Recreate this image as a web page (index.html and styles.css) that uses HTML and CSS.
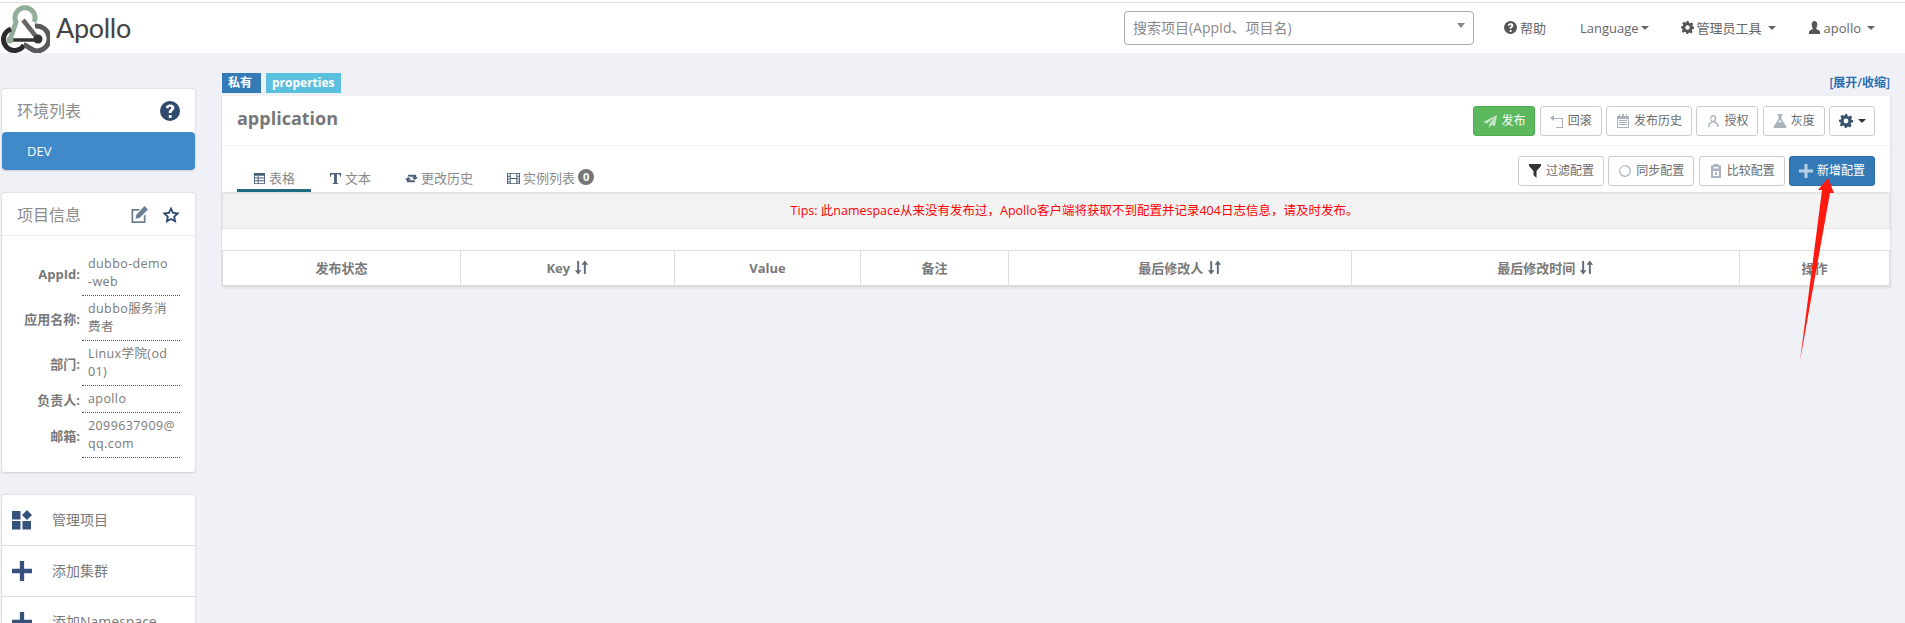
FILE: index.html
```html
<!DOCTYPE html>
<html lang="zh">
<head>
<meta charset="utf-8">
<title>Apollo</title>
<link rel="stylesheet" href="styles.css">
</head>
<body>
<svg class="defs" width="0" height="0">
  <symbol id="i-send" viewBox="0 0 14 14"><path d="M14 1 0 8l4 1.500L11 4 6 10.500V14l2.500-3L12 12z"/></symbol>
  <symbol id="i-undo" viewBox="0 0 14 14"><path d="M4 1 0 4l4 3V5h8v8H6v1h7V4H4z"/></symbol>
  <symbol id="i-cal" viewBox="0 0 14 14"><path d="M3 0h1v2h2V0h2v2h2V0h1v2h2v12H1V2h2zM2 5v8h10V5zm1 1h8v1H3zm0 2h8v1H3zm0 2h8v1H3z"/></symbol>
  <symbol id="i-userline" viewBox="0 0 14 14"><path d="M7 1a3.300 3.300 0 0 1 3.300 3.500c0 1.300-.6 2.400-1.300 3l3.500 2.500V13h-1.500v-2.200L8 8.600H6l-2.500 2.200V13H2v-3l3.500-2.500c-.7-.6-1.300-1.700-1.300-3A3.300 3.300 0 0 1 7 1zm0 1.500a1.800 1.800 0 0 0-1.800 2c0 1.200.8 2.500 1.800 2.500s1.800-1.300 1.800-2.500a1.800 1.800 0 0 0-1.800-2z"/></symbol>
  <symbol id="i-flask" viewBox="0 0 14 14"><path d="M4.500 0h5v1.200h-1V5l4.800 7.500c.3.700 0 1.500-.8 1.500H1.500c-.8 0-1.100-.8-.8-1.500L5.500 5V1.200h-1zM7 2v3.500L5.300 8.500h3.400L7 5.500z"/></symbol>
  <symbol id="i-cog" viewBox="0 0 14 14"><path d="M5.800 0h2.400l.4 1.900 1.300.6 1.700-1 1.600 1.700-1 1.600.5 1.300L14 6v2.400l-1.900.4-.5 1.300 1 1.700-1.700 1.600-1.600-1-1.300.5L7.600 14H5.800l-.4-1.900-1.300-.5-1.700 1L.8 11l1-1.700-.5-1.300L0 7.800V5.800l1.900-.4.500-1.300-1-1.700L3 .8l1.700 1 1.300-.6zM7 4.600a2.400 2.400 0 1 0 0 4.800 2.400 2.400 0 0 0 0-4.800z"/></symbol>
  <symbol id="i-filter" viewBox="0 0 14 14"><path d="M1 0h12v2L8.500 7v7L5.500 11V7L1 2z"/></symbol>
  <symbol id="i-sync" viewBox="0 0 14 14"><path d="M7 1a6 6 0 1 1-6 6h1.300A4.700 4.700 0 1 0 7 2.300z"/><path d="M1 7a6 6 0 0 1 6-6v1.300A4.700 4.700 0 0 0 2.300 7z" opacity=".7"/></symbol>
  <symbol id="i-clip" viewBox="0 0 14 14"><path d="M5 0h4l1 1.500h2V14H2V1.500h2zm-.5 3v1.500h5V3zM4 7v5h6V7zm2 1h2v3H6z"/></symbol>
  <symbol id="i-plus" viewBox="0 0 14 14"><path d="M5.500 0h3v5.500H14v3H8.500V14h-3V8.500H0v-3h5.500z"/></symbol>
  <symbol id="i-table" viewBox="0 0 14 14"><path d="M1 1h12v12H1zm1 3v2h3V4zm4 0v2h6V4zM2 7v2h3V7zm4 0v2h6V7zm-4 3v2h3v-2zm4 0v2h6v-2z"/></symbol>
  <symbol id="i-font" viewBox="0 0 14 14"><path d="M1 1h12v4h-1c0-1.500-.6-2.500-2-2.500H8.500V11c0 .8.500 1 1.500 1v1H4v-1c1 0 1.500-.2 1.500-1V2.500H4C2.600 2.500 2 3.500 2 5H1z"/></symbol>
  <symbol id="i-retweet" viewBox="0 0 14 14"><path d="M3 3h9v2.500l2 .5-3.500 2.500L7 6l2.500-.2V5H4zM11 11H2V8.500L0 8l3.500-2.500L7 8l-2.500.2V9H10z"/></symbol>
  <symbol id="i-film" viewBox="0 0 14 14"><path d="M0 1h14v12H0zm1 1v2h2V2zm0 3v2h2V5zm0 3v2h2V8zm0 3v1h2v-1zM11 2v2h2V2zm0 3v2h2V5zm0 3v2h2V8zm0 3v1h2v-1zM4 2v4.500h6V2zm0 5.500V12h6V7.500z"/></symbol>
  <symbol id="i-help" viewBox="0 0 20 20"><path fill-rule="evenodd" d="M10 0a10 10 0 1 1 0 20 10 10 0 0 1 0-20zM8.800 14v3h2.800v-3zM10 3.500c-2.400 0-4 1.200-4.200 3.500l2.600.4c.1-1 .7-1.600 1.500-1.600s1.400.5 1.400 1.200c0 .6-.4 1-1.200 1.600-1.100.9-1.400 1.600-1.300 3.400h2.700c0-1 .2-1.300 1-2 1.100-.9 1.900-1.800 1.900-3.200 0-2.300-1.800-3.300-4.400-3.300z"/></symbol>
  <symbol id="i-edit" viewBox="0 0 18 18"><path d="M1.500 3H10L8.400 4.700H3.200v10.600h10.600V10L15.500 8.300v8.700h-14z"/><path d="M14.500 0 18 3.500 9.500 12l-4 .8.800-4z"/></symbol>
  <symbol id="i-star" viewBox="0 0 18 18"><path fill-rule="evenodd" d="m9 .5 2.600 5.600 6.100.7-4.500 4.200 1.200 6L9 14 3.600 17l1.200-6L.3 6.800l6.100-.7zm0 4.100L7.700 7.700l-3.300.4 2.400 2.300-.6 3.200L9 12l2.800 1.600-.6-3.200 2.400-2.300-3.300-.4z"/></symbol>
  <symbol id="i-dash" viewBox="0 0 20 20"><path d="M0 1h8.500v8.500H0zM0 11h8.500v8.500H0zM10.500 11H19v8.500h-8.500zM15 0l5 5-5 5-5-5z"/></symbol>
  <symbol id="i-user" viewBox="0 0 14 14"><path d="M7 0c2 0 3 1.500 3 3.500S9 7.500 8.800 8.500c1.500.8 4.200 1.500 4.200 3.500v2H1v-2c0-2 2.700-2.700 4.200-3.500C5 7.500 4 5.500 4 3.500S5 0 7 0z"/></symbol>
  <symbol id="i-sort" viewBox="0 0 14 14"><path d="M3 1h1.800v8.500H7L3.900 13.500.8 9.500H3zM9.200 4.500H7L10.100.5l3.100 4H11V13H9.200z"/></symbol>
</svg>

<header class="nav">
  <a class="brand">
    <svg class="logo" viewBox="0 2 50 50">
      <g fill="none">
        <path class="logo-green" d="M34 21A10 10 0 1 0 16 21L10 39"/>
        <path class="logo-mid" d="M23 19 38 38"/>
        <path class="logo-bar" d="M12 39H38"/>
        <path class="logo-left" d="M11 28A11 11 0 1 0 24 44"/>
        <path class="logo-right" d="M35 25A12 12 0 1 1 38 50C30 50 28 44 24 44"/>
      </g>
      <circle class="logo-dot" cx="38" cy="38" r="4.500"/>
      <circle class="logo-gdot" cx="10" cy="39" r="3.500"/>
    </svg>
    <span class="brand-name">Apollo</span>
  </a>
  <div class="search"><span class="search-text">搜索项目(AppId、项目名)</span><i class="search-caret"></i></div>
  <nav class="nav-links">
    <a class="nav-link nav-help"><svg class="ic13"><use href="#i-help"/></svg>帮助</a>
    <a class="nav-link nav-lang">Language<i class="caret"></i></a>
    <a class="nav-link nav-admin"><svg class="ic13"><use href="#i-cog"/></svg>管理员工具<i class="caret caret-gap"></i></a>
    <a class="nav-link nav-user"><svg class="ic13"><use href="#i-user"/></svg>apollo<i class="caret caret-gap"></i></a>
  </nav>
</header>

<div class="page">
  <aside class="sidebar">
    <section class="card">
      <div class="card-head card-head-env"><span>环境列表</span><svg class="head-help"><use href="#i-help"/></svg></div>
      <div class="env-active">DEV</div>
    </section>

    <section class="card card-info">
      <div class="card-head card-head-info"><span>项目信息</span>
        <span class="head-icons"><svg class="head-edit"><use href="#i-edit"/></svg><svg class="head-star"><use href="#i-star"/></svg></span>
      </div>
      <dl class="info">
        <dt>AppId:</dt><dd>dubbo-demo<br>-web</dd>
        <dt>应用名称:</dt><dd>dubbo服务消<br>费者</dd>
        <dt>部门:</dt><dd>Linux学院(od<br>01)</dd>
        <dt>负责人:</dt><dd>apollo</dd>
        <dt>邮箱:</dt><dd>2099637909@<br>qq.com</dd>
      </dl>
    </section>

    <section class="card card-menu">
      <a class="menu-item"><svg class="menu-ic"><use href="#i-dash"/></svg>管理项目</a>
      <a class="menu-item"><svg class="menu-ic"><use href="#i-plus"/></svg>添加集群</a>
      <a class="menu-item"><svg class="menu-ic"><use href="#i-plus"/></svg>添加Namespace</a>
    </section>
  </aside>

  <main class="main">
    <div class="tagrow">
      <div class="tags"><span class="tag tag-blue">私有</span><span class="tag tag-cyan">properties</span></div>
      <a class="toggle">[展开/收缩]</a>
    </div>
    <section class="ns">
      <div class="ns-head">
        <h2 class="ns-title">application</h2>
        <div class="btns">
          <a class="btn btn-green"><svg class="ic"><use href="#i-send"/></svg>发布</a>
          <a class="btn"><svg class="ic"><use href="#i-undo"/></svg>回滚</a>
          <a class="btn"><svg class="ic"><use href="#i-cal"/></svg>发布历史</a>
          <a class="btn"><svg class="ic"><use href="#i-userline"/></svg>授权</a>
          <a class="btn"><svg class="ic"><use href="#i-flask"/></svg>灰度</a>
          <a class="btn btn-gear"><svg class="ic ic-cog"><use href="#i-cog"/></svg><i class="caret caret-dark"></i></a>
        </div>
      </div>
      <div class="ns-tabs">
        <ul class="tabs">
          <li class="tab tab-on"><svg class="ic-tab"><use href="#i-table"/></svg>表格</li>
          <li class="tab"><svg class="ic-tab"><use href="#i-font"/></svg>文本</li>
          <li class="tab"><svg class="ic-tab"><use href="#i-retweet"/></svg>更改历史</li>
          <li class="tab"><svg class="ic-tab"><use href="#i-film"/></svg>实例列表<span class="badge">0</span></li>
        </ul>
        <div class="btns">
          <a class="btn"><svg class="ic ic-black"><use href="#i-filter"/></svg>过滤配置</a>
          <a class="btn"><svg class="ic"><use href="#i-sync"/></svg>同步配置</a>
          <a class="btn"><svg class="ic"><use href="#i-clip"/></svg>比较配置</a>
          <a class="btn btn-blue"><svg class="ic"><use href="#i-plus"/></svg>新增配置</a>
        </div>
      </div>
      <div class="tips">Tips: 此namespace从来没有发布过，Apollo客户端将获取不到配置并记录404日志信息，请及时发布。</div>
      <div class="spacer"></div>
      <table class="grid">
        <thead>
          <tr>
            <th>发布状态</th>
            <th>Key <svg class="ic-sort"><use href="#i-sort"/></svg></th>
            <th>Value</th>
            <th>备注</th>
            <th>最后修改人 <svg class="ic-sort"><use href="#i-sort"/></svg></th>
            <th>最后修改时间 <svg class="ic-sort"><use href="#i-sort"/></svg></th>
            <th>操作</th>
          </tr>
        </thead>
      </table>
    </section>
  </main>
</div>

<svg class="arrow" viewBox="0 0 40 183"><path d="M30 0 36 15 32 15 2 183 24 12 20 12z"/></svg>
</body>
</html>
```
FILE: styles.css
```css
* { box-sizing: border-box; }
html, body { margin: 0; height: 623px; overflow: hidden; }
body {
  position: relative;
  background: #eff1f6;
  color: #797979;
  font: 13px/18px "Open Sans", "Noto Sans CJK SC", sans-serif;
}
.defs { position: absolute; }
svg { fill: currentColor; }

/* nav */
.nav {
  height: 53px;
  padding: 2px 30px 0 0;
  background: #fff;
  display: flex;
  align-items: center;
  box-shadow: inset 0 2px 0 #fff, inset 0 3px 0 #ddd;
}
.brand { display: flex; align-items: center; margin-right: auto; }
.logo { width: 50px; height: 50px; flex: none; }
.logo-green { stroke: #93ad9b; stroke-width: 5; }
.logo-mid { stroke: #666; stroke-width: 4.5; }
.logo-bar { stroke: #333; stroke-width: 3.5; }
.logo-left { stroke: #2b2b2b; stroke-width: 5; }
.logo-right { stroke: #5a5a5a; stroke-width: 5; }
.logo-dot { fill: #333; }
.logo-gdot { fill: #93ad9b; }
.brand-name { margin-left: 6px; font: 400 27px/30px Lato, sans-serif; color: #444; letter-spacing: -.3px; }
.search {
  width: 350px; height: 34px;
  margin-top: 1px;
  padding: 0 8px;
  border: 1px solid #aaa; border-radius: 4px;
  display: flex; align-items: center; justify-content: space-between;
  font-size: 14px; color: #8a8a8a;
}
.search-caret { width: 0; height: 0; border: 4px solid transparent; border-top: 5px solid #888; border-bottom: 0; margin-top: -6px; }
.nav-links { display: flex; align-items: center; color: #666; }
.nav-link { display: flex; align-items: center; }
.nav-help { margin-left: 30px; }
.nav-lang { margin-left: 34px; }
.nav-admin { margin-left: 32px; }
.nav-user { margin-left: 32px; }
.ic13 { width: 13px; height: 13px; margin-right: 3px; color: #555; }
.caret { display: inline-block; width: 0; height: 0; margin-left: 2px; border: 4px solid transparent; border-top-color: #666; border-bottom: 0; }
.caret-gap { margin-left: 6px; }

/* layout */
.page { display: flex; align-items: flex-start; }
.sidebar { width: 195px; margin: 35px 0 0 1px; flex: none; }
.main { flex: 1; min-width: 0; margin: 20px 15px 0 26px; }

/* cards */
.card {
  background: #fff;
  border: 1px solid #e2e2e6;
  border-bottom-color: #d8d8dc;
  border-radius: 4px;
  box-shadow: 0 1px 1px rgba(0,0,0,.05);
  margin-bottom: 21px;
}
.card-head {
  display: flex; align-items: center; justify-content: space-between;
  padding: 0 15px;
  font-size: 16px; color: #8c8c8c;
}
.card-head-env { height: 43px; }
.card-head-info { height: 43px; padding-top: 1px; border-bottom: 1px solid #eeeff3; }
.head-help { width: 20px; height: 20px; color: #2f4a6e; }
.head-icons { display: flex; gap: 14px; align-items: center; }
.head-edit { width: 18px; height: 18px; color: #6b7f94; }
.head-star { width: 18px; height: 18px; color: #2f4a6e; }
.env-active {
  height: 38px;
  padding-left: 25px;
  background: #418aca;
  color: #fff;
  border-radius: 4px;
  font-size: 13px; line-height: 38px;
}
.card-info { height: 281px; }
.info {
  margin: 15px 0 0;
  display: grid;
  grid-template-columns: 78px 98px;
  column-gap: 2px;
}
.info dt { align-self: center; text-align: right; font-weight: 700; color: #797979; }
.info dd {
  margin: 0;
  padding: 4px 0 4px 6px;
  border-bottom: 1px dotted #555;
  white-space: nowrap;
  font-size: 12.500px;
  letter-spacing: .4px;
}
.card-menu { margin-bottom: 0; }
.menu-item {
  display: flex; align-items: center;
  height: 51px;
  padding-left: 10px;
  border-bottom: 1px solid #dedee2;
  font-size: 14px; color: #797979;
}
.menu-ic { width: 20px; height: 20px; margin-right: 20px; color: #36527c; }

/* main */
.tagrow { display: flex; justify-content: space-between; height: 23px; }
.tags { display: flex; gap: 5px; }
.tag { height: 20px; padding: 0 6px; color: #fff; font-size: 12px; font-weight: 700; line-height: 19px; }
.tag-blue { width: 39px; background: #337ab7; }
.tag-cyan { background: #5bc0de; }
.toggle { font-size: 12px; font-weight: 600; color: #2a6cb0; line-height: 20px; }
.ns { background: #fff; box-shadow: -1px 0 0 #e0e0e3, 1px 1px 2px #ddd; }
.ns-head {
  height: 50px;
  padding: 10px 15px 0 15px;
  border-bottom: 1px solid #f0f0f7;
  display: flex; justify-content: space-between; align-items: flex-start;
}
.ns-title { margin: 0; font-size: 18px; line-height: 24px; font-weight: 700; color: #777; }
.btns { display: flex; gap: 4.300px; }
.btn {
  height: 30px; padding: 0 9px;
  display: flex; align-items: center;
  border: 1px solid #ccc; border-radius: 3px;
  background: #fff; color: #6c6c6c;
  font-size: 12px; white-space: nowrap;
}
.ic { width: 14px; height: 14px; margin-right: 4px; flex: none; color: #a9b2bd; }
.ic-black { color: #333; }
.ic-cog { color: #3a536f; margin-right: 3px; }
.caret-dark { border-top-color: #333; }
.btn-gear { padding: 0 8px 0 9px; }
.btn-green { background: #5cb85c; border-color: #4cae4c; color: #fff; }
.btn-green .ic { color: #c5e3c5; }
.btn-blue { background: #337ab7; border-color: #2e6da4; color: #fff; }
.btn-blue .ic { color: #b6cfe4; }
.ns-tabs {
  height: 46px;
  padding: 10px 15px 0 15px;
  display: flex; justify-content: space-between; align-items: flex-start;
}
.tabs { display: flex; gap: 2px; margin: 0; padding: 0; list-style: none; height: 36px; }
.tab {
  height: 36px; padding: 13px 16px 0;
  display: flex; align-items: flex-start;
  color: #8a8a8a;
  white-space: nowrap;
}
.tab-on { border-bottom: 3px solid #1f6b84; }
.ic-tab { width: 13px; height: 13px; margin: 3px 3px 0 0; color: #4a5f78; }
.badge {
  margin-left: 3px; width: 16px; height: 16px;
  border-radius: 50%;
  background: #777; color: #fff;
  font-size: 11px; font-weight: 700; line-height: 16px; text-align: center;
}
.tips {
  height: 37px;
  padding-left: 37px;
  background: #f3f3f4;
  border-top: 2px solid #e4e4e6;
  border-bottom: 1px solid #e4e4e6;
  border-left: 1px solid #e4e4e6;
  border-right: 1px solid #e4e4e6;
  color: #f00;
  text-align: center;
  font-size: 12.500px;
  line-height: 34px;
}
.spacer { height: 21px; }
.grid { width: 100%; table-layout: fixed; border-collapse: collapse; }
.grid th {
  height: 35px; padding: 0;
  border: 1px solid #ddd;
  border-bottom: 2px solid #ddd;
  font-size: 13px; font-weight: 700; color: #797979;
}
.grid th:nth-child(1) { width: 238px; }
.grid th:nth-child(2) { width: 214px; }
.grid th:nth-child(3) { width: 186px; }
.grid th:nth-child(4) { width: 148px; }
.grid th:nth-child(5) { width: 343px; }
.grid th:nth-child(6) { width: 388px; }
.ic-sort { width: 15px; height: 15px; vertical-align: -2px; color: #5f6b78; }

/* annotation arrow */
.arrow {
  position: absolute; left: 1798px; top: 178px;
  width: 40px; height: 183px;
  fill: #ff1a10;
}
```
